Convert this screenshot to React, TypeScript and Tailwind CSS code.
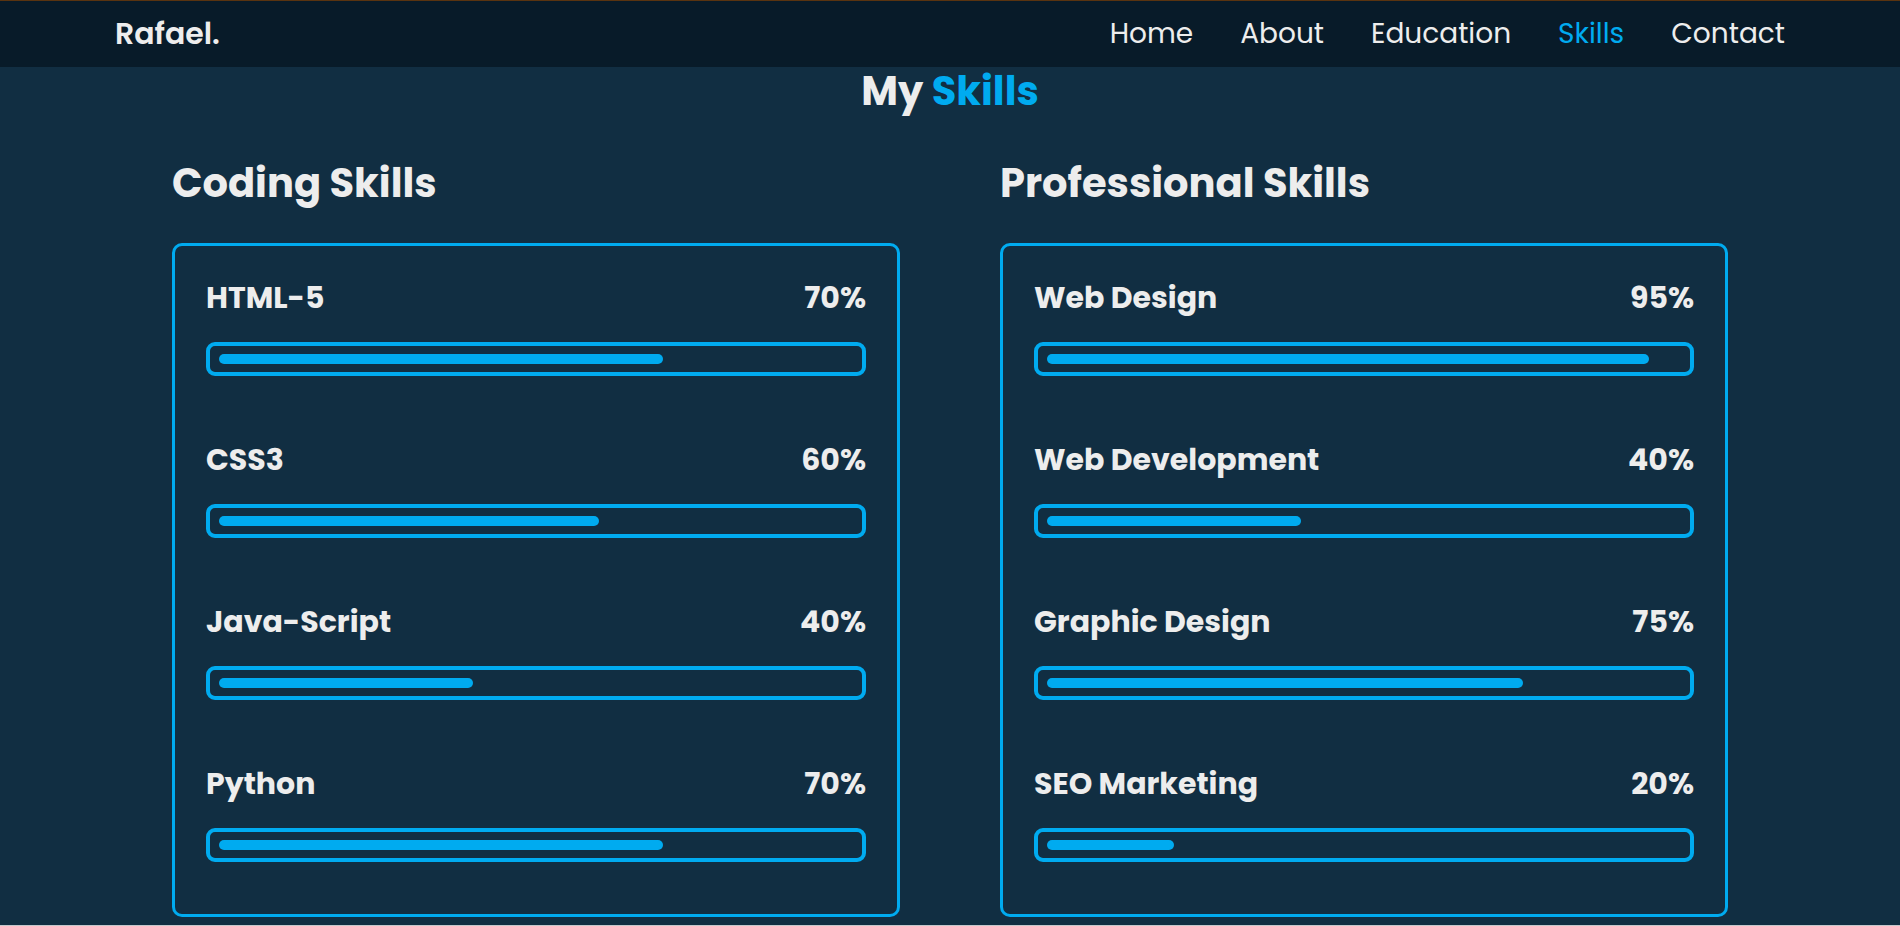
const navItems = ["Home", "About", "Education", "Skills", "Contact"];

type Skill = { name: string; value: number };

const coding: Skill[] = [
  { name: "HTML-5", value: 70 },
  { name: "CSS3", value: 60 },
  { name: "Java-Script", value: 40 },
  { name: "Python", value: 70 },
];

const professional: Skill[] = [
  { name: "Web Design", value: 95 },
  { name: "Web Development", value: 40 },
  { name: "Graphic Design", value: 75 },
  { name: "SEO Marketing", value: 20 },
];

function SkillColumn({ title, skills }: { title: string; skills: Skill[] }) {
  return (
    <div className="flex flex-col">
      <h2 className="text-[40px] font-bold leading-[50px] text-[#ededed]">{title}</h2>
      <div className="mt-[35px] rounded-[10px] border-[3px] border-[#00abf0] px-[31px] pt-[34px] pb-[52px]">
        <div className="flex flex-col gap-[66px]">
          {skills.map((s) => (
            <div key={s.name} className="flex flex-col">
              <div className="flex items-center justify-between text-[30px] font-bold leading-[36px] text-[#ededed]">
                <span>{s.name}</span>
                <span>{s.value}%</span>
              </div>
              <div className="mt-[26px] h-[34px] rounded-[9px] border-4 border-[#00abf0] px-[9px] py-[8px]">
                <div
                  className="h-full rounded-full bg-[#00abf0]"
                  style={{ width: `${s.value}%` }}
                />
              </div>
            </div>
          ))}
        </div>
      </div>
    </div>
  );
}

export default function App() {
  return (
    <div
      className="flex h-[926px] w-full flex-col overflow-hidden bg-[#112e42]"
      style={{ fontFamily: "Poppins, Inter, 'Open Sans', sans-serif" }}
    >
      <header className="flex h-[67px] shrink-0 items-center justify-between border-t border-[#5a3410] bg-[#081b29] px-[115px]">
        <span className="text-[30px] font-semibold leading-none text-[#ededed]">Rafael.</span>
        <nav className="flex items-center gap-[47px]">
          {navItems.map((item) => (
            <a
              key={item}
              className={[
                "text-[28px] leading-none",
                item === "Skills" ? "text-[#00abf0]" : "text-[#ededed]",
              ].join(" ")}
            >
              {item}
            </a>
          ))}
        </nav>
      </header>

      <section className="min-h-0 flex-1 px-[172px]">
        <h1 className="text-center text-[40px] font-bold leading-[48px] text-[#ededed]">
          My <span className="text-[#00abf0]">Skills</span>
        </h1>
        <div className="mt-[43px] grid grid-cols-2 gap-[100px]">
          <SkillColumn title="Coding Skills" skills={coding} />
          <SkillColumn title="Professional Skills" skills={professional} />
        </div>
      </section>

      <div className="h-px shrink-0 bg-[#c4c8cc]" />
    </div>
  );
}
